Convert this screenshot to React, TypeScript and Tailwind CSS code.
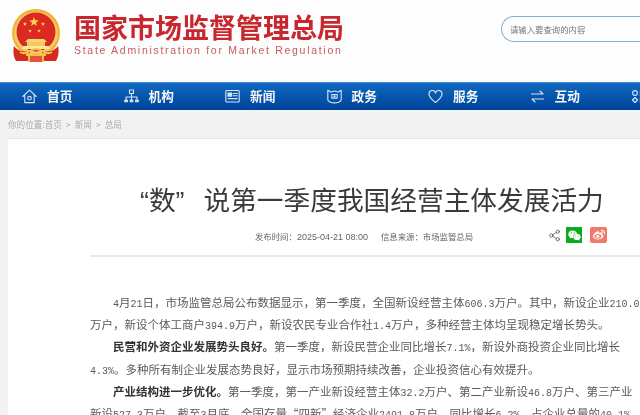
import React from "react";
import { FaWeixin, FaWeibo } from "react-icons/fa";
import { Share2 } from "lucide-react";

const cjk = "font-['Noto_Sans_CJK_SC','Liberation_Sans',sans-serif]";

function Star({ x, y, r }: { x: number; y: number; r: number }) {
  const pts: string[] = [];
  for (let i = 0; i < 10; i++) {
    const a = (-90 + i * 36) * (Math.PI / 180);
    const rad = i % 2 === 0 ? r : r * 0.42;
    pts.push(`${x + rad * Math.cos(a)},${y + rad * Math.sin(a)}`);
  }
  return <polygon points={pts.join(" ")} fill="#f7d24a" />;
}

function Emblem() {
  return (
    <svg width="52" height="54" viewBox="0 0 52 54" className="shrink-0">
      <circle cx="26" cy="25" r="24" fill="#eeb53a" />
      <circle cx="26" cy="25" r="21.5" fill="#f4cf6a" />
      <circle cx="26" cy="24" r="19.5" fill="#dc2a22" />
      <Star x={24} y={14} r={5} />
      <Star x={15} y={16} r={2.2} />
      <Star x={33} y={16} r={2.2} />
      <Star x={20} y={23} r={2} />
      <Star x={29} y={23} r={2} />
      <path d="M15 34 L37 34 L34 31 L18 31 Z" fill="#f6d777" />
      <rect x="17" y="34" width="18" height="4" fill="#f3c95a" />
      <rect x="13" y="38" width="26" height="3" fill="#fbe7a4" />
      <path d="M4 38 C10 46 16 42 20 44 L20 53 L6 53 C3 48 3 42 4 38 Z" fill="#d42a20" />
      <path d="M48 38 C42 46 36 42 32 44 L32 53 L46 53 C49 48 49 42 48 38 Z" fill="#d42a20" />
      <path d="M10 44 C16 48 20 41 26 41 C32 41 36 48 42 44" stroke="#f2c14e" strokeWidth="2" fill="none" />
      <rect x="16" y="45" width="20" height="3" fill="#f2c14e" />
      <rect x="18" y="48" width="2" height="6" fill="#f2c14e" />
      <rect x="32" y="48" width="2" height="6" fill="#f2c14e" />
      <rect x="20" y="48" width="12" height="6" fill="#e8503c" />
    </svg>
  );
}

const ic = { fill: "none", stroke: "#d6e6f7", strokeWidth: 1.1, strokeLinecap: "round" as const, strokeLinejoin: "round" as const };

const icons: React.ReactNode[] = [
  <svg key="a" width="15" height="15" viewBox="0 0 15 15" {...ic}>
    <path d="M.8 7.5 7.5 1.2l6.7 6.3M2.8 6.5V13.6h9.4V6.5" />
    <circle cx="7.5" cy="9.2" r="1.8" />
  </svg>,
  <svg key="b" width="15" height="15" viewBox="0 0 15 15" {...ic}>
    <rect x="5.5" y="1" width="4" height="3.5" />
    <path d="M7.5 4.5V8M2 10V8h11v2M7.5 8v2" />
    <rect x=".8" y="11" width="2.6" height="1.8" fill="#d6e6f7" />
    <rect x="6.2" y="11" width="2.6" height="1.8" fill="#d6e6f7" />
    <rect x="11.6" y="11" width="2.6" height="1.8" fill="#d6e6f7" />
  </svg>,
  <svg key="c" width="15" height="15" viewBox="0 0 15 15" {...ic}>
    <rect x=".8" y="1.5" width="13.4" height="11.5" rx="1" />
    <rect x="3" y="4" width="3.6" height="3.2" fill="#d6e6f7" />
    <path d="M8.2 4.5h4M8.2 6.8h4M3 9.6h9.2" />
  </svg>,
  <svg key="d" width="15" height="15" viewBox="0 0 15 15" {...ic}>
    <path d="M.8 1.2 4 3l3.5-1L11 3l3.2-1.8v9.5c0 1.6-3.4 3.2-6.7 3.2S.8 12.3.8 10.7Z" />
    <rect x="4.8" y="5.5" width="5.4" height="3.6" />
    <circle cx="7.5" cy="7.3" r=".6" fill="#d6e6f7" />
  </svg>,
  <svg key="e" width="15" height="15" viewBox="0 0 15 15" {...ic}>
    <path d="M7.5 13.5C3 10 1 7.5 1 5a3.3 3.3 0 0 1 6.5-1A3.3 3.3 0 0 1 14 5c0 2.5-2 5-6.5 8.5Z" />
  </svg>,
  <svg key="f" width="15" height="15" viewBox="0 0 15 15" {...ic}>
    <path d="M1.5 5H13L10 2M13.5 10H2l3 3" />
  </svg>,
  <svg key="g" width="15" height="15" viewBox="0 0 15 15" {...ic}>
    <circle cx="4" cy="4" r="2.4" />
    <path d="M4 8.5 6.5 11 4 13.5 1.5 11ZM9 3h6M9 6h6M9 10h6M9 13h6" />
  </svg>,
];

const navItems = ["首页", "机构", "新闻", "政务", "服务", "互动"];

function N({ children }: { children: React.ReactNode }) {
  return <span className="font-['Liberation_Mono',monospace] text-[10px] leading-none">{children}</span>;
}

export default function App() {
  return (
    <div className="w-[640px] h-[415px] overflow-hidden bg-white blur-[0.3px]">
      <header className="h-[82px] flex bg-[#fdfdfd]">
        <div className="pl-[10px] pt-[8px]">
          <Emblem />
        </div>
        <div className="pl-[12px] pt-[11px]">
          <div className={`${cjk} text-[27px] leading-[32px] font-bold text-[#c9272e] whitespace-nowrap`}>
            国家市场监督管理总局
          </div>
          <div className="font-['Liberation_Sans',sans-serif] text-[10.5px] leading-[13px] mt-[1px] text-[#c85a5c] whitespace-nowrap tracking-[1.71px]">
            State Administration for Market Regulation
          </div>
        </div>
        <div className="ml-auto mt-[16px] h-[26px] w-[139px] rounded-l-[13px] border border-r-0 border-[#7fb0d8] pl-[8px] flex items-center">
          <span className={`${cjk} text-[8.4px] text-[#777]`}>请输入要查询的内容</span>
        </div>
      </header>

      <nav className="h-[28px] flex pl-[22px] pb-[1px] border-t border-[#3a8fd8] bg-gradient-to-b from-[#1169bf] to-[#00439a]">
        {navItems.map((t, i) => (
          <div key={t} className="w-[101.5px] shrink-0 flex items-center">
            <span className="w-[25px] shrink-0 flex">{icons[i]}</span>
            <span className={`${cjk} text-[12.7px] font-bold text-[#f2f6fb] whitespace-nowrap`}>{t}</span>
          </div>
        ))}
        <div className="shrink-0 flex items-center">{icons[6]}</div>
      </nav>

      <div className="bg-[#f2f2f2] h-[305px] pl-[8px]">
        <div className={`${cjk} h-[28px] flex items-center text-[8.6px] text-[#aaa] whitespace-nowrap`}>
          你的位置:首页<span className="mx-[4px]">&gt;</span>新闻<span className="mx-[4px]">&gt;</span>总局
        </div>
        <main className="bg-white border-t border-[#e6e6e6] h-[300px] pl-[82px]">
          <h1 className={`${cjk} h-[80px] pt-[40px] pl-[50px] text-[26.7px] leading-[40px] font-normal text-[#3a3a3a] whitespace-nowrap`}>
            <span className="font-['Liberation_Sans',sans-serif]">“</span>数<span className="font-['Liberation_Sans',sans-serif] mr-[19px]">”</span>说第一季度我国经营主体发展活力
          </h1>
          <div className="mt-[7px] h-[31px] flex items-start border-b-2 border-[#e9e9e9]">
            <div className={`${cjk} pl-[165px] pt-[3px] text-[8.4px] leading-[14px] text-[#666] whitespace-nowrap flex`}>
              <span className="w-[126px]">发布时间：<span className="font-['Liberation_Sans',sans-serif] text-[9px] leading-none">2025-04-21 08:00</span></span>
              <span>信息来源：市场监管总局</span>
            </div>
            <div className="ml-[75px] mt-[1px] flex items-center">
              <Share2 size={13} strokeWidth={1.3} className="text-[#444]" />
              <span className="ml-[5px] w-[16px] h-[16px] bg-[#0aae1c] flex items-center justify-center">
                <FaWeixin size={13} className="text-white" />
              </span>
              <span className="ml-[8px] w-[17px] h-[16px] bg-[#ee7a68] rounded-[2px] flex items-center justify-center">
                <FaWeibo size={12} className="text-white" />
              </span>
            </div>
          </div>
          <article className={`${cjk} mt-[34px] text-[11.5px] leading-[22.2px] text-[#5a5a5a] whitespace-nowrap`}>
            <p className="pl-[23px]"><N>4</N>月<N>21</N>日，市场监管总局公布数据显示，第一季度，全国新设经营主体<N>606.3</N>万户。其中，新设企业<N>210.0</N></p>
            <p>万户，新设个体工商户<N>394.9</N>万户，新设农民专业合作社<N>1.4</N>万户，多种经营主体均呈现稳定增长势头。</p>
            <p className="pl-[23px]">
              <strong className="font-bold text-[#333]">民营和外资企业发展势头良好。</strong>第一季度，新设民营企业同比增长<N>7.1%</N>，新设外商投资企业同比增长
            </p>
            <p><N>4.3%</N>。多种所有制企业发展态势良好，显示市场预期持续改善，企业投资信心有效提升。</p>
            <p className="pl-[23px]">
              <strong className="font-bold text-[#333]">产业结构进一步优化。</strong>第一季度，第一产业新设经营主体<N>32.2</N>万户、第二产业新设<N>46.8</N>万户、第三产业
            </p>
            <p>新设<N>527.3</N>万户。截至<N>3</N>月底，全国存量“四新”经济企业<N>2491.8</N>万户，同比增长<N>6.2%</N>，占企业总量的<N>40.1%</N></p>
          </article>
        </main>
      </div>
    </div>
  );
}
